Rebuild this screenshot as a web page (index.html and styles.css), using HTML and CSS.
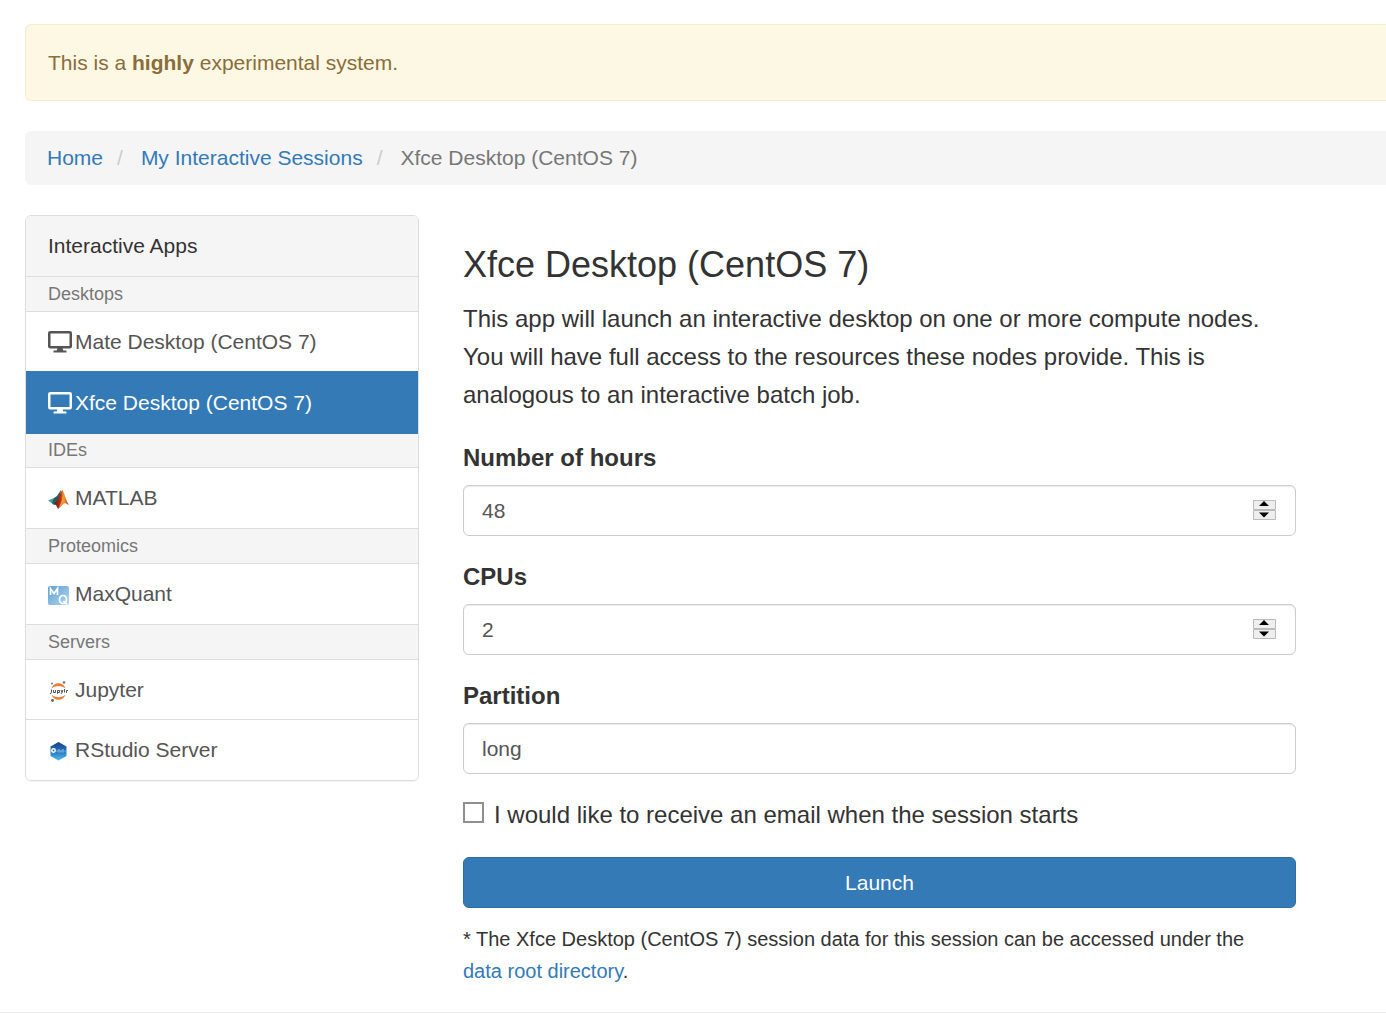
FILE: index.html
```html
<!DOCTYPE html>
<html lang="en">
<head>
<meta charset="utf-8">
<title>Xfce Desktop (CentOS 7)</title>
<link rel="stylesheet" href="styles.css">
</head>
<body>
<div class="page">
  <div class="alert" role="alert">This is a <strong>highly</strong> experimental system.</div>
  <nav aria-label="Breadcrumb">
    <ol class="breadcrumb">
      <li><a href="#">Home</a></li>
      <li><a href="#">My Interactive Sessions</a></li>
      <li>Xfce Desktop (CentOS 7)</li>
    </ol>
  </nav>
  <div class="columns">
    <nav class="apps" aria-label="Interactive Apps">
      <div class="apps-title">Interactive Apps</div>
      <p class="group">Desktops</p>
      <a class="app" href="#">
        <svg class="icon monitor" viewBox="0 0 24 22" aria-hidden="true"><rect x="1.25" y="1.25" width="21.500" height="15" rx="1" fill="none" stroke="currentColor" stroke-width="2.500"/><path d="M9.500 17h5l.8 2.500H18q.5 0 .5.500v1.500h-13V20q0-.5.5-.5h2.700z" fill="currentColor"/></svg>
        <span>Mate Desktop (CentOS 7)</span>
      </a>
      <a class="app active" href="#" aria-current="page">
        <svg class="icon monitor" viewBox="0 0 24 22" aria-hidden="true"><rect x="1.25" y="1.25" width="21.500" height="15" rx="1" fill="none" stroke="currentColor" stroke-width="2.500"/><path d="M9.500 17h5l.8 2.500H18q.5 0 .5.500v1.500h-13V20q0-.5.5-.5h2.700z" fill="currentColor"/></svg>
        <span>Xfce Desktop (CentOS 7)</span>
      </a>
      <p class="group">IDEs</p>
      <a class="app" href="#">
        <svg class="icon" viewBox="0 0 21 21" aria-hidden="true">
          <defs><linearGradient id="peak"><stop offset="0" stop-color="#6b1712"/><stop offset=".45" stop-color="#b8311a"/><stop offset=".65" stop-color="#f6a03a"/><stop offset="1" stop-color="#b52b12"/></linearGradient></defs>
          <path d="M0 11.500 6 9l4 3-4 4z" fill="#4f9a99"/>
          <path d="m6 9 3-2 4-6-1 8-5 7-3-2z" fill="#275b62"/>
          <path d="M14 1c2 0 3 9 7 15l-4-2-3 2-4 4-2-4-2-1c4-3 5-9 8-14z" fill="url(#peak)"/>
          <path d="M14.500 2c1 4 0 9-4 17l4-4c2-4 1-10 0-13z" fill="#f39a2b"/>
        </svg>
        <span>MATLAB</span>
      </a>
      <p class="group">Proteomics</p>
      <a class="app" href="#">
        <svg class="icon" viewBox="0 0 21 21" aria-hidden="true">
          <defs><linearGradient id="tile" x2="1" y2="1"><stop offset="0" stop-color="#5b9fd3"/><stop offset=".5" stop-color="#87bbe1"/><stop offset="1" stop-color="#b5d6ed"/></linearGradient></defs>
          <rect y="1" width="21" height="19" rx="2" fill="url(#tile)"/>
          <path d="M2.500 10V3.500l3.500 5 3.500-5V10" fill="none" stroke="#fff" stroke-width="1.700"/>
          <ellipse cx="15" cy="14.500" rx="3.500" ry="4" fill="none" stroke="#fff" stroke-width="1.700"/>
          <path d="m15.500 16 3.500 3.500" stroke="#fff" stroke-width="1.700"/>
        </svg>
        <span>MaxQuant</span>
      </a>
      <p class="group">Servers</p>
      <a class="app" href="#">
        <svg class="icon" viewBox="0 0 21 21" aria-hidden="true">
          <path d="M3.500 7.500c2-7 12-7 14 0-3.500-3.500-10.500-3.500-14 0zM3.500 13.500c2 7 12 7 14 0-3.500 3.500-10.500 3.500-14 0z" fill="#ef7c35"/>
          <circle cx="4" cy="2.500" r="1" fill="#777"/><circle cx="16" cy="1.500" r="1.300" fill="#777"/><circle cx="4.500" cy="19.500" r="1.400" fill="#666"/>
          <path d="M3.500 8.500v3q0 1-1.500 1M5.500 9v2.500h2V9M9.500 13V9.500h2v2h-2M13 9l1 2.500L15 9m-1 2.500-1 1.500M16.500 8v3.500M18.500 12V9.500H20" fill="none" stroke="#555"/>
        </svg>
        <span>Jupyter</span>
      </a>
      <a class="app" href="#">
        <svg class="icon" viewBox="0 0 21 21" aria-hidden="true">
          <defs><linearGradient id="hex" x2="0" y2="1"><stop offset="0" stop-color="#173f86"/><stop offset=".5" stop-color="#2372c2"/><stop offset="1" stop-color="#55bde9"/></linearGradient></defs>
          <path d="m10.500 1 8 4.500v9.500l-8 4.500L2.500 15V5.500z" fill="url(#hex)"/>
          <circle cx="5.500" cy="9.500" r="1.700" fill="none" stroke="#fff" stroke-width="1.500"/>
          <path d="M8.500 10h1.500M11 8v3.500M13 9v2.500M15 8v3.500M16.500 10h1" stroke="#a5cdf0"/>
        </svg>
        <span>RStudio Server</span>
      </a>
    </nav>
    <main class="content">
      <h1>Xfce Desktop (CentOS 7)</h1>
      <p class="lead">This app will launch an interactive desktop on one or more compute nodes. You will have full access to the resources these nodes provide. This is analogous to an interactive batch job.</p>
      <form>
        <div class="field">
          <label for="hours">Number of hours</label>
          <div class="number">
            <input id="hours" type="number" value="48">
            <svg class="spinner" viewBox="0 0 24 21" aria-hidden="true"><path d="M.5.500h22v9H.5zM.5 10.500h22v9H.5z" fill="#eee" stroke="#bbb"/><path d="M6 6 11 1l5 5zM6 12.500h10L11 17.500z"/></svg>
          </div>
        </div>
        <div class="field">
          <label for="cpus">CPUs</label>
          <div class="number">
            <input id="cpus" type="number" value="2">
            <svg class="spinner" viewBox="0 0 24 21" aria-hidden="true"><path d="M.5.500h22v9H.5zM.5 10.500h22v9H.5z" fill="#eee" stroke="#bbb"/><path d="M6 6 11 1l5 5zM6 12.500h10L11 17.500z"/></svg>
          </div>
        </div>
        <div class="field">
          <label for="partition">Partition</label>
          <input id="partition" type="text" value="long">
        </div>
        <label class="check"><input type="checkbox"><span>I would like to receive an email when the session starts</span></label>
        <button class="launch" type="submit">Launch</button>
      </form>
      <p class="note">* The Xfce Desktop (CentOS 7) session data for this session can be accessed under the <a href="#">data root directory</a>.</p>
    </main>
  </div>
</div>
<footer class="footer"></footer>
</body>
</html>
```
FILE: styles.css
```css
* { box-sizing: border-box; }

body {
  margin: 0;
  background: #fff;
  color: #333;
  font: 21px/30px "Liberation Sans", Arial, sans-serif;
}

a { color: #337ab7; text-decoration: none; }

.page { padding: 24px 0 0 25px; }

.alert {
  padding: 23px 22px 22px;
  border: 1px solid #faebcc;
  border-right: 0;
  border-radius: 6px 0 0 6px;
  background: #fcf8e3;
  color: #8a6d3b;
}

.breadcrumb {
  display: flex;
  margin: 30px 0;
  padding: 12px 22px;
  border-radius: 6px 0 0 6px;
  background: #f5f5f5;
  color: #777;
  list-style: none;
}

.breadcrumb li + li::before {
  content: "/";
  padding: 0 18px 0 14px;
  color: #ccc;
}

.columns {
  display: grid;
  grid-template-columns: 394px minmax(0, 1fr);
  gap: 44px;
  align-items: start;
  padding-right: 90px;
}

.apps {
  border: 1px solid #ddd;
  border-radius: 6px;
  box-shadow: 0 1px 1px rgba(0, 0, 0, .05);
  overflow: hidden;
}

.apps-title {
  padding: 15px 22px;
  border-bottom: 1px solid #ddd;
  background: #f5f5f5;
}

.group {
  margin: 0;
  padding: 4px 22px;
  border-bottom: 1px solid #ddd;
  background: #f5f5f5;
  color: #777;
  font-size: 18px;
  line-height: 26px;
}

.app {
  display: flex;
  align-items: center;
  gap: 6px;
  padding: 15px 22px;
  border-bottom: 1px solid #ddd;
  background: #fff;
  color: #555;
}

.app + .app {
  position: relative;
  margin-top: -2px;
  border-top: 1px solid #ddd;
}

.app:last-child { border-bottom: 0; }

.app.active {
  padding: 16px 22px 15px;
  border-color: #337ab7;
  background: #337ab7;
  color: #fff;
}

.app.active + .group { margin-top: -1px; }

.icon { flex: none; width: 21px; height: 21px; margin-top: 3px; }
.icon.monitor { width: 24px; height: 22px; margin: 0 -3px 0 0; }

.content { padding-top: 30px; }

h1 {
  margin: 0 0 15px;
  font-size: 36px;
  font-weight: 400;
  line-height: 40px;
}

.lead { margin: 0 0 25px; font-size: 24px; line-height: 38px; }

.field { margin-bottom: 22px; }

.field label {
  display: block;
  margin-bottom: 8px;
  font-size: 24px;
  font-weight: 700;
  line-height: 38px;
}

.field input {
  display: block;
  width: 100%;
  height: 51px;
  padding: 9px 18px;
  border: 1px solid #ccc;
  border-radius: 6px;
  box-shadow: inset 0 1px 1px rgba(0, 0, 0, .08);
  background: #fff;
  color: #555;
  font: inherit;
}

.number { position: relative; }
.number input { appearance: textfield; }
.number input::-webkit-inner-spin-button { display: none; }

.spinner {
  position: absolute;
  top: 15px;
  right: 19px;
  width: 24px;
  height: 21px;
  pointer-events: none;
}

.check {
  display: flex;
  gap: 10px;
  align-items: flex-start;
  margin-bottom: 23px;
  font-size: 24px;
  line-height: 38px;
}

.check input {
  appearance: none;
  flex: none;
  width: 21px;
  height: 21px;
  margin: 6px 0 0;
  border: 2px solid #8e8f8f;
  background: #fff;
}

.check input:checked { background: #337ab7; }

.launch {
  display: block;
  width: 100%;
  height: 51px;
  border: 1px solid #2e6da4;
  border-radius: 6px;
  background: #337ab7;
  color: #fff;
  font: inherit;
}

.note {
  margin: 15px 0 25px;
  padding-right: 30px;
  font-size: 20px;
  line-height: 32px;
}

.note a { white-space: nowrap; }

.footer { border-top: 1px solid #eee; }
```
